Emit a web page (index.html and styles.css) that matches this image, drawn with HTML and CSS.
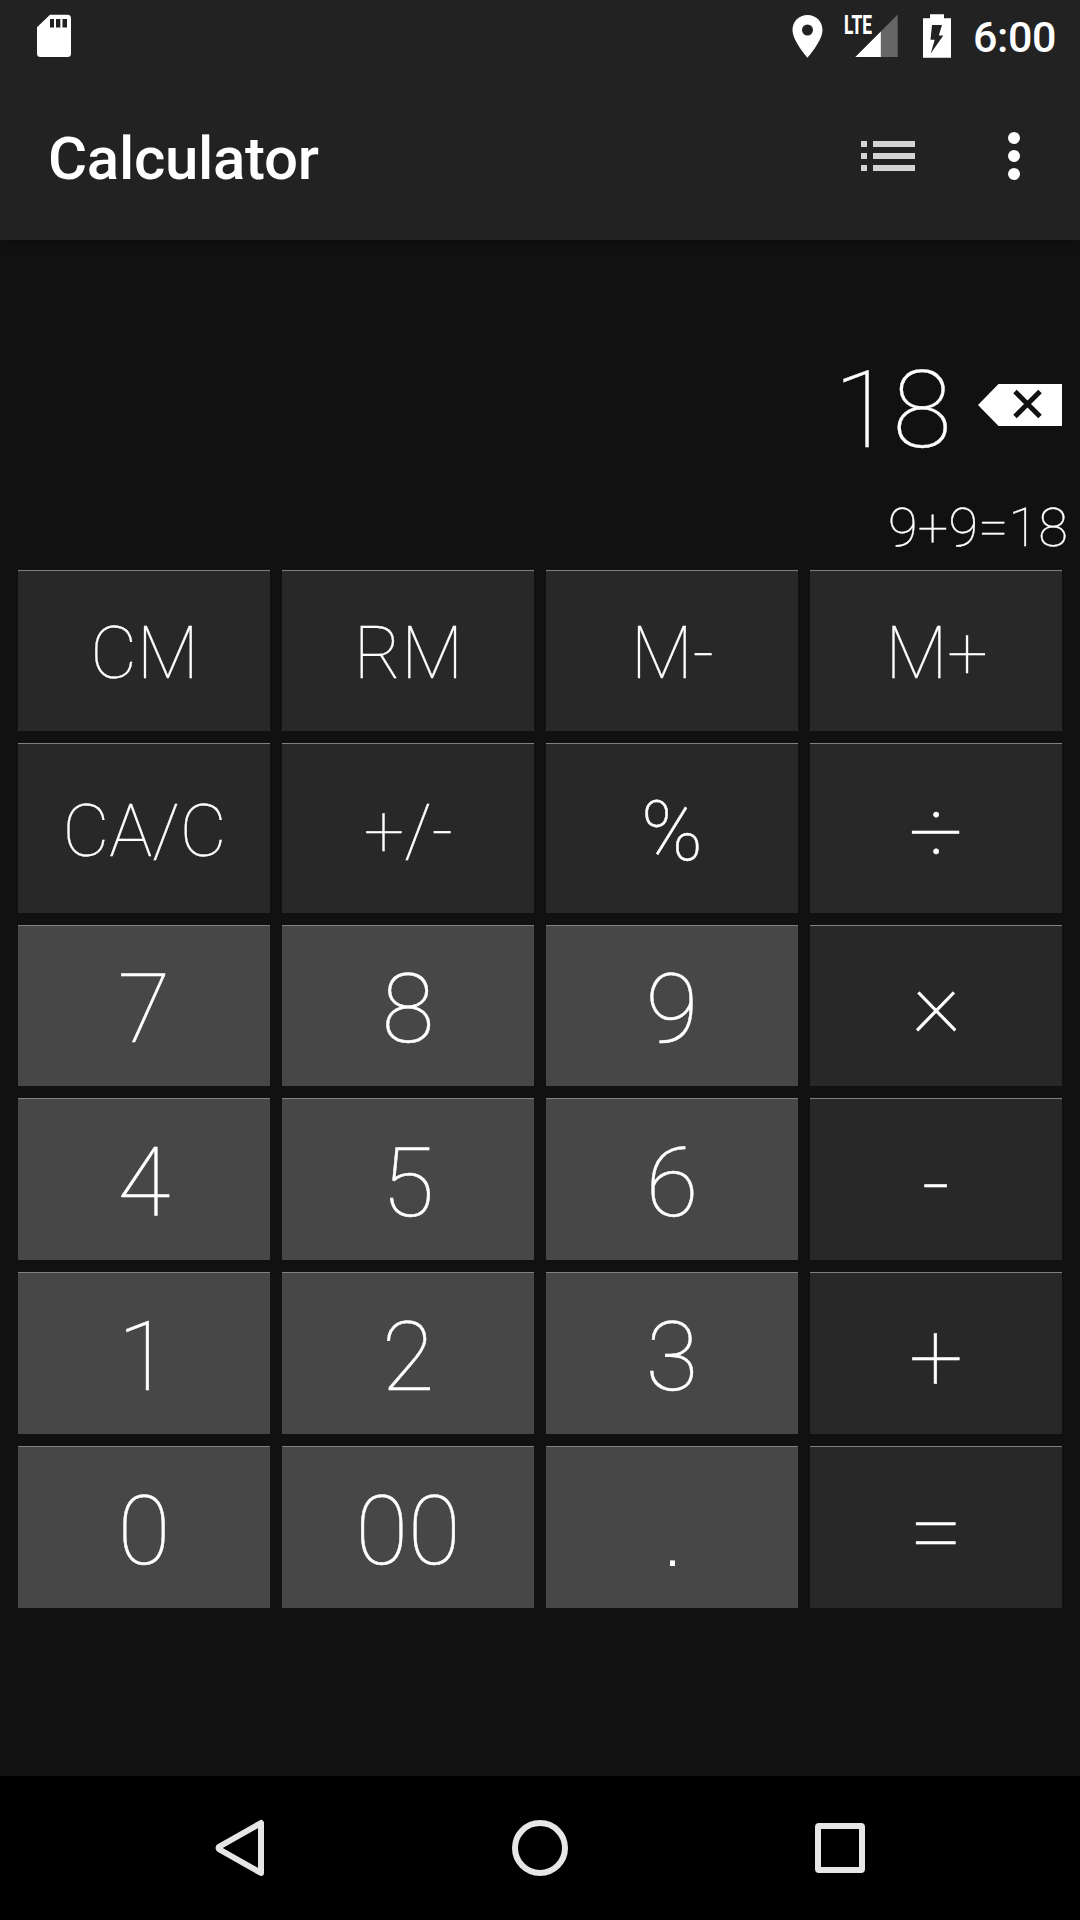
FILE: index.html
```html
<!DOCTYPE html>
<html lang="en">
<head>
<meta charset="utf-8">
<title>Calculator</title>
<link rel="stylesheet" href="styles.css">
</head>
<body>
<div class="screen">
  <header class="top">
    <div class="status">
      <svg class="status-sd" width="34" height="44" viewBox="0 0 34 44"><path fill="#fff" fill-rule="evenodd" d="M13 .7H30.500Q34 .7 34 4.200V39.500Q34 43 30.500 43H3.500Q0 43 0 39.500V13.200ZM13 5V13.500H17V5ZM19 5V13.500H23.300V5ZM25.500 5V13.500H30V5Z"/></svg>
      <svg class="status-pin" width="32" height="44" viewBox="0 0 32 44"><path fill="#fff" fill-rule="evenodd" d="M15.500 1C7 1 .5 7.500 .5 16C.5 27 15.500 43.700 15.500 43.700S30.500 27 30.500 16C30.500 7.500 24 1 15.500 1ZM15.500 10.500A5.500 5.500 0 1 1 15.500 21.500A5.500 5.500 0 1 1 15.500 10.500Z"/></svg>
      <svg class="status-signal" width="58" height="44" viewBox="-4 0 58 44"><path fill="#666" d="M53.700 .5V43H36V18.200Z"/><path fill="#fff" d="M36.800 17.500V43H11.300Z"/><text class="lte" x="0" y="19.700" textLength="28" lengthAdjust="spacingAndGlyphs">LTE</text></svg>
      <svg class="status-battery" width="28" height="44" viewBox="0 0 28 44"><path fill="#fff" fill-rule="evenodd" d="M7 .3H21V4.200H28V43.800H0V4.200H7ZM9 11L7.500 25.700H11.700L7.700 39.500L20.300 21.500H15.800L19 11Z"/></svg>
      <span class="clock">6:00</span>
    </div>
    <div class="toolbar">
      <h1 class="title">Calculator</h1>
      <svg class="list-icon" width="54" height="30" viewBox="0 0 54 30" fill="#d4d4d4"><path d="M0 0H6V6H0ZM12 0H54V6H12ZM0 12H6V18H0ZM12 12H54V18H12ZM0 24H6V30H0ZM12 24H54V30H12Z"/></svg>
      <svg width="12" height="48" viewBox="0 0 12 48" fill="#fff"><circle cx="6" cy="6" r="6"/><circle cx="6" cy="24" r="6"/><circle cx="6" cy="42" r="6"/></svg>
    </div>
  </header>
  <main class="display">
    <div class="result">
      <span class="value">18</span>
      <svg width="84" height="42" viewBox="0 0 84 42"><path fill="#fff" d="M0 21L20.500 0H84V42H20.500Z"/><path d="M37 7.500L62 32.500M62 7.500L37 32.500" stroke="#111" stroke-width="5"/></svg>
    </div>
    <div class="history">9+9=18</div>
  </main>
  <section class="keys">
    <div class="key word">CM</div><div class="key word">RM</div><div class="key word">M-</div><div class="key word">M+</div>
    <div class="key word">CA/C</div><div class="key word">+/-</div><div class="key percent">%</div><div class="key">÷</div>
    <div class="key num">7</div><div class="key num">8</div><div class="key num">9</div><div class="key times">×</div>
    <div class="key num">4</div><div class="key num">5</div><div class="key num">6</div><div class="key">-</div>
    <div class="key num">1</div><div class="key num">2</div><div class="key num">3</div><div class="key">+</div>
    <div class="key num">0</div><div class="key num">00</div><div class="key num point">.</div><div class="key">=</div>
  </section>
  <nav class="nav">
    <svg width="60" height="60" viewBox="0 0 60 60"><path d="M51 5V55L9.500 31.500Q7.500 30 9.500 28.500Z"/></svg>
    <svg width="60" height="60" viewBox="0 0 60 60"><circle cx="30" cy="30" r="25"/></svg>
    <svg width="60" height="60" viewBox="0 0 60 60"><rect x="8" y="8" width="44" height="44" rx="1"/></svg>
  </nav>
</div>
</body>
</html>
```
FILE: styles.css
```css
* { box-sizing: border-box; }
body { margin: 0; background: #111; color: #fff; font-family: Roboto, sans-serif; }
svg { display: block; flex: none; }
.screen { width: 1080px; height: 1920px; display: flex; flex-direction: column; overflow: hidden; }
.top { height: 240px; background: #222; box-shadow: 0 2px 12px rgba(0, 0, 0, .3); }
.status { height: 72px; padding: 14px 24px 0 37px; display: flex; align-items: flex-start; }
.status-pin { margin-left: auto; }
.status-signal { margin-left: 16px; overflow: visible; }
.status-battery { margin-left: 25px; }
.lte { font: 800 26px Roboto, sans-serif; fill: #fff; }
.clock { width: 83px; margin-left: 22px; font-size: 43px; font-weight: 460; line-height: 44px; padding-top: 1px; letter-spacing: -.4px; white-space: nowrap; }
.toolbar { height: 168px; padding: 0 60px 0 48px; display: flex; align-items: center; }
.title { margin: 5px auto 0 0; font-size: 60px; font-weight: 500; line-height: 70px; letter-spacing: -.3px; }
.list-icon { margin-right: 93px; }
.toolbar svg { margin-bottom: 24px; margin-top: 24px; }
.display { height: 330px; padding-top: 101px; }
.result { height: 128px; padding-right: 18px; display: flex; align-items: center; justify-content: flex-end; gap: 27px; }
.value { font-size: 108px; font-weight: 100; line-height: 128px; padding-top: 9px; letter-spacing: -.5px; -webkit-text-stroke: .4px #fff; }
.history { padding: 27px 12px 0 0; text-align: right; font-size: 54px; font-weight: 100; line-height: 64px; letter-spacing: .2px; -webkit-text-stroke: .4px #fff; }
.keys { padding: 0 18px; display: grid; grid-template-columns: repeat(4, 252px); grid-template-rows: 161px 170px 161px 162px 162px 162px; gap: 12px; }
.key { display: flex; align-items: center; justify-content: center; background: #282828; border-top: 1px solid #808080; padding-top: 8px; font-size: 96px; font-weight: 100; line-height: 112px; -webkit-text-stroke: .5px #fff; }
.word { font-size: 72px; line-height: 84px; padding: 6px 0 0 1px; -webkit-text-stroke-width: .3px; }
.percent { font-size: 83px; line-height: 98px; padding-top: 6px; }
.times { padding: 0 0 17px 1px; }
.num { background: #474747; padding-top: 6px; }
.point { font-family: "Liberation Sans", sans-serif; font-size: 52px; font-weight: 400; line-height: 60px; padding: 41px 0 0 1px; -webkit-text-stroke-width: 0; }
.nav { margin-top: auto; height: 144px; background: #000; padding: 0 210px; display: flex; align-items: center; justify-content: space-between; }
.nav svg { fill: none; stroke: #e6e6e6; stroke-width: 6; stroke-linejoin: round; }
```
